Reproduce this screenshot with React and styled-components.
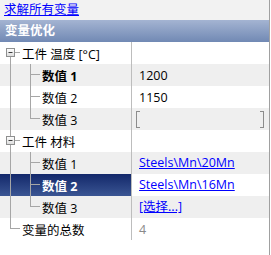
import React from 'react'
import styled, { createGlobalStyle } from 'styled-components'

const GlobalStyle = createGlobalStyle`
  html, body {
    margin: 0;
    padding: 0;
    background: #ffffff;
  }
  body {
    font-family: "Open Sans", "Noto Sans CJK SC", sans-serif;
    font-size: 12.5px;
    color: #000;
  }
`

const rows = [
  { kind: 'group', label: '工件 温度 [°C]', first: true },
  { kind: 'child', label: '数值 1', bold: true, value: '1200' },
  { kind: 'child', label: '数值 2', value: '1150' },
  { kind: 'child', label: '数值 3', last: true, empty: true },
  { kind: 'group', label: '工件 材料' },
  { kind: 'child', label: '数值 1', link: 'Steels\\Mn\\20Mn' },
  { kind: 'child', label: '数值 2', bold: true, selected: true, link: 'Steels\\Mn\\16Mn' },
  { kind: 'child', label: '数值 3', last: true, link: '[选择...]' },
  { kind: 'leaf', label: '变量的总数', value: '4', muted: true },
]

export default function App() {
  return (
    <Panel>
      <GlobalStyle />
      <LinkBar>
        <ActionLink href="#">求解所有变量</ActionLink>
      </LinkBar>
      <Category>变量优化</Category>
      <Grid>
        {rows.map((row, i) => (
          <Row key={i} $shaded={i % 2 === 1}>
            <LabelCell $selected={row.selected}>
              <TreeGlyph row={row} />
              <Label $bold={row.bold} $selected={row.selected}>{row.label}</Label>
            </LabelCell>
            <ValueCell>
              {row.value && <Value $muted={row.muted}>{row.value}</Value>}
              {row.link && <ActionLink href="#">{row.link}</ActionLink>}
              {row.empty && (
                <EmptyField>
                  <Bracket $side="left" />
                  <Bracket $side="right" />
                </EmptyField>
              )}
            </ValueCell>
          </Row>
        ))}
      </Grid>
    </Panel>
  )
}

// tree connectors and the collapse box, one small drawing per row
function TreeGlyph({ row }) {
  const c = '#a6a6a6'
  if (row.kind === 'group') {
    return (
      <Gutter width="20" height="22">
        {!row.first && <line x1="10.5" y1="0" x2="10.5" y2="6" stroke={c} />}
        <line x1="10.5" y1="15" x2="10.5" y2="22" stroke={c} />
        <line x1="15" y1="10.5" x2="20" y2="10.5" stroke={c} />
        <defs>
          <linearGradient id="bx" x1="0" y1="0" x2="0" y2="1">
            <stop offset="0" stopColor="#ffffff" />
            <stop offset="1" stopColor="#dcdcdc" />
          </linearGradient>
        </defs>
        <rect x="6.5" y="6.5" width="8" height="8" fill="url(#bx)" stroke="#8e8f8f" />
        <line x1="8.5" y1="10.5" x2="12.5" y2="10.5" stroke="#3c3c3c" />
      </Gutter>
    )
  }
  if (row.kind === 'leaf') {
    return (
      <Gutter width="20" height="22">
        <line x1="10.5" y1="0" x2="10.5" y2="11" stroke={c} />
        <line x1="10.5" y1="10.5" x2="20" y2="10.5" stroke={c} />
      </Gutter>
    )
  }
  return (
    <Gutter width="40" height="22">
      <line x1="10.5" y1="0" x2="10.5" y2="22" stroke={c} />
      <line x1="30.5" y1="0" x2="30.5" y2={row.last ? 11 : 22} stroke={c} />
      <line x1="30.5" y1="10.5" x2="40" y2="10.5" stroke={c} />
    </Gutter>
  )
}

const Panel = styled.div`
  width: 269px;
  height: 255px;
  border-right: 1px solid #a0a0a0;
  display: flex;
  flex-direction: column;
  background: #ffffff;
`

const LinkBar = styled.div`
  height: 20px;
  background: #f2f2f2;
  padding-left: 4px;
  display: flex;
  align-items: center;
`

const ActionLink = styled.a`
  color: #0000ff;
  text-decoration: underline;
  line-height: 16px;
  white-space: nowrap;
`

const Category = styled.div`
  height: 22px;
  line-height: 22px;
  padding-left: 5px;
  color: #ffffff;
  font-weight: bold;
  background: linear-gradient(#a4b4d2, #7189b4);
`

const Grid = styled.div`
  display: flex;
  flex-direction: column;
`

const Row = styled.div`
  display: grid;
  grid-template-columns: 131px 1fr;
  height: 22px;
  background: ${p => (p.$shaded ? '#efefef' : '#ffffff')};
`

const LabelCell = styled.div`
  display: flex;
  align-items: center;
  gap: 2px;
  background: ${p => (p.$selected ? 'linear-gradient(#13286a, #3a5593)' : 'transparent')};
`

const Gutter = styled.svg`
  display: block;
  flex: none;
`

const Label = styled.span`
  font-weight: ${p => (p.$bold ? 'bold' : 'normal')};
  color: ${p => (p.$selected ? '#ffffff' : '#000000')};
  white-space: nowrap;
`

const ValueCell = styled.div`
  border-left: 1px solid #bdbdbd;
  display: flex;
  align-items: center;
  padding-left: 7px;
  padding-right: 5px;
`

const Value = styled.span`
  color: ${p => (p.$muted ? '#8a8a8a' : '#000000')};
`

const EmptyField = styled.div`
  flex: 1;
  height: 16px;
  margin-left: -3px;
  display: flex;
  justify-content: space-between;
`

const Bracket = styled.span`
  width: 3px;
  height: 15px;
  border: 1px solid #8c8c8c;
  ${p => (p.$side === 'left' ? 'border-right: none;' : 'border-left: none;')}
`
